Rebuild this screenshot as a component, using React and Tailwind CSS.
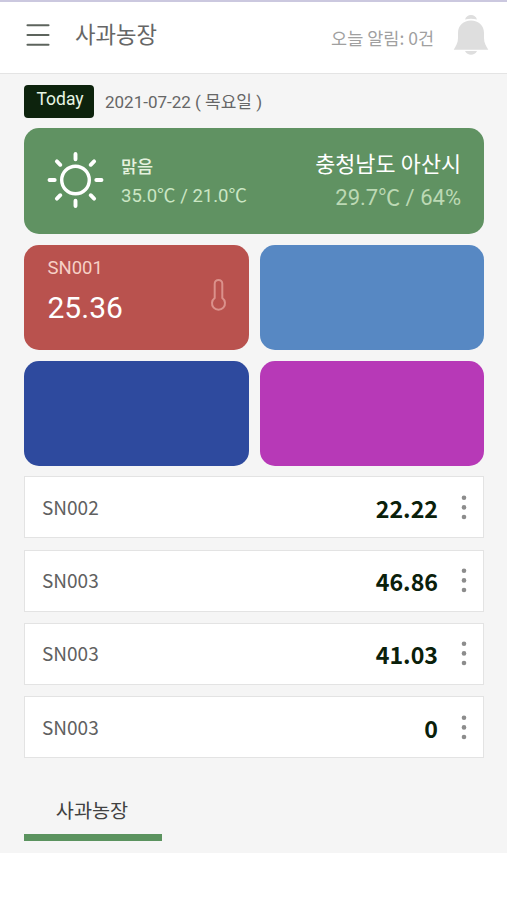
const sensors = [
  { id: 'SN002', value: '22.22' },
  { id: 'SN003', value: '46.86' },
  { id: 'SN003', value: '41.03' },
  { id: 'SN003', value: '0' },
];

const SANS = "font-['Noto_Sans_CJK_KR',sans-serif]";

function MenuIcon() {
  return (
    <svg className="block h-[24px] w-[24px]" viewBox="0 0 24 24" stroke="#5d645d" strokeWidth="2.1" strokeLinecap="round">
      <path d="M1.5 2.2H22.5M1.5 12H22.5M1.5 21.7H22.5" />
    </svg>
  );
}

function BellIcon() {
  return (
    <svg className="block h-[40px] w-[36px]" viewBox="0 0 36 40" fill="#dedede">
      <path d="M12 4.6Q13.5 0 18 0Q22.500 0 24 4.600Q18 3 12 4.600Z" />
      <path d="M18 5.600C25.500 5.600 31 10.500 31 18V23C31 28 33 31 35.300 34.700H.7C3 31 5 28 5 23V18C5 10.500 10.500 5.600 18 5.600Z" />
      <path d="M12 36H24Q22 39.800 18 39.800Q14 39.800 12 36Z" />
    </svg>
  );
}

function SunIcon() {
  return (
    <svg className="block h-[58px] w-[58px]" viewBox="-29.5 -29 58 58" fill="none" stroke="#fff" strokeWidth="3.900" strokeLinecap="round">
      <circle r="13.800" strokeWidth="3.400" />
      <path d="M0-26V-20.800M0 20.800V26M-26 0H-20.800M20.800 0H26M-18.600-18.600L-15.200-15.200M18.600-18.600L15.200-15.200M-18.600 18.600L-15.200 15.200M18.600 18.600L15.200 15.200" />
    </svg>
  );
}

function ThermometerIcon() {
  return (
    <svg className="block h-[34px] w-[18px]" viewBox="0.5 0 18 34" fill="none" stroke="#db918b" strokeWidth="2">
      <path d="M5.200 20V5.700a3.800 3.800 0 0 1 7.600 0V20a6.500 6.500 0 1 1-7.600 0Z" />
    </svg>
  );
}

function DotsIcon() {
  return (
    <svg className="block h-[26px] w-[6px]" viewBox="0 0 6 26" fill="#8c8c8c">
      <circle cx="3" cy="3.800" r="2.300" />
      <circle cx="3" cy="13.400" r="2.300" />
      <circle cx="3" cy="23" r="2.300" />
    </svg>
  );
}

function SensorRow({ id, value }) {
  return (
    <div className="flex h-[62px] items-center border border-[#e3e3e3] bg-white pr-[16px] pl-[17px]">
      <span className="-mt-px text-[19px] leading-[26px] text-[#606060]">{id}</span>
      <span className="mt-px ml-auto text-[23.200px] leading-[30px] font-bold text-[#0a200a]">{value}</span>
      <span className="-mt-px ml-[23px]"><DotsIcon /></span>
    </div>
  );
}

export default function App() {
  return (
    <div className={`h-[900px] w-[507px] overflow-hidden bg-white whitespace-nowrap ${SANS}`}>
      <header className="flex h-[73px] items-center border-t-2 border-[#cbc8df] bg-white pr-[18px] pb-[6px] pl-[26px]">
        <MenuIcon />
        <h1 className="-mt-[3px] ml-[25px] text-[22.300px] leading-[32px] text-[#666]">사과농장</h1>
        <span className="mt-[6px] ml-auto text-[17.500px] leading-[26px] text-[#a0a0a0]">오늘 알림: 0건</span>
        <span className="ml-[19px]"><BellIcon /></span>
      </header>

      <main className="h-[780px] border-t border-[#e4e4e4] bg-[#f5f5f5] pt-[11px] pr-[23px] pl-[24px]">
        <div className="flex h-[33px] items-center">
          <span className="flex h-[33px] w-[70px] justify-center rounded-[4px] bg-[#0d230d] pt-[3px] pl-[2px] font-[Roboto,sans-serif] text-[17.500px] leading-[22px] text-[#e6f5e4]">Today</span>
          <span className="ml-[11px] font-[Roboto,'Noto_Sans_CJK_KR',sans-serif] text-[17px] leading-[24px] text-[#666]">2021-07-22 ( 목요일 )</span>
        </div>

        <section className="mt-[10.300px] flex h-[105.700px] items-center rounded-[15px] bg-[#609262] pr-[23px] pl-[22px] font-[Roboto,'Noto_Sans_CJK_KR',sans-serif]">
          <span className="-mt-[3px]"><SunIcon /></span>
          <div className="mt-px ml-[17px] flex flex-col">
            <span className="text-[17.500px] leading-[28px] font-medium text-[#e4f1de]">맑음</span>
            <span className="text-[18.500px] leading-[30px] text-[#cbe6c4]">35.0℃ / 21.0℃</span>
          </div>
          <div className="ml-auto flex flex-col items-end">
            <span className="text-[21.800px] leading-[33px] text-white">충청남도 아산시</span>
            <span className="text-[22px] leading-[34px] text-[#bcd9b4]">29.7℃ / 64%</span>
          </div>
        </section>

        <section className="mt-[11px] grid grid-cols-2 gap-[11px]">
          <div className="flex h-[105px] items-center justify-between rounded-[15px] bg-[#b9524e] pr-[21px] pl-[23.500px] font-[Roboto,sans-serif]">
            <div className="-mt-[8px] flex flex-col">
              <span className="text-[18.500px] leading-[30px] text-[#f6d0c6]">SN001</span>
              <span className="text-[30px] leading-[50px] text-white">25.36</span>
            </div>
            <span className="-mt-[5px]"><ThermometerIcon /></span>
          </div>
          <div className="h-[105px] rounded-[15px] bg-[#5788c3]" />
          <div className="h-[105px] rounded-[15px] bg-[#2e4a9e]" />
          <div className="h-[105px] rounded-[15px] bg-[#b739b7]" />
        </section>

        <section className="mt-[10.500px] flex flex-col gap-[11.200px]">
          {sensors.map((s, i) => <SensorRow key={i} id={s.id} value={s.value} />)}
        </section>

        <nav className="mt-[36px] flex">
          <div className="flex h-[47px] w-[138px] justify-center border-b-[7px] border-[#5b935f] pt-px pr-[2px]">
            <span className="text-[19.700px] leading-[30px] text-[#414141]">사과농장</span>
          </div>
        </nav>
      </main>
    </div>
  );
}
